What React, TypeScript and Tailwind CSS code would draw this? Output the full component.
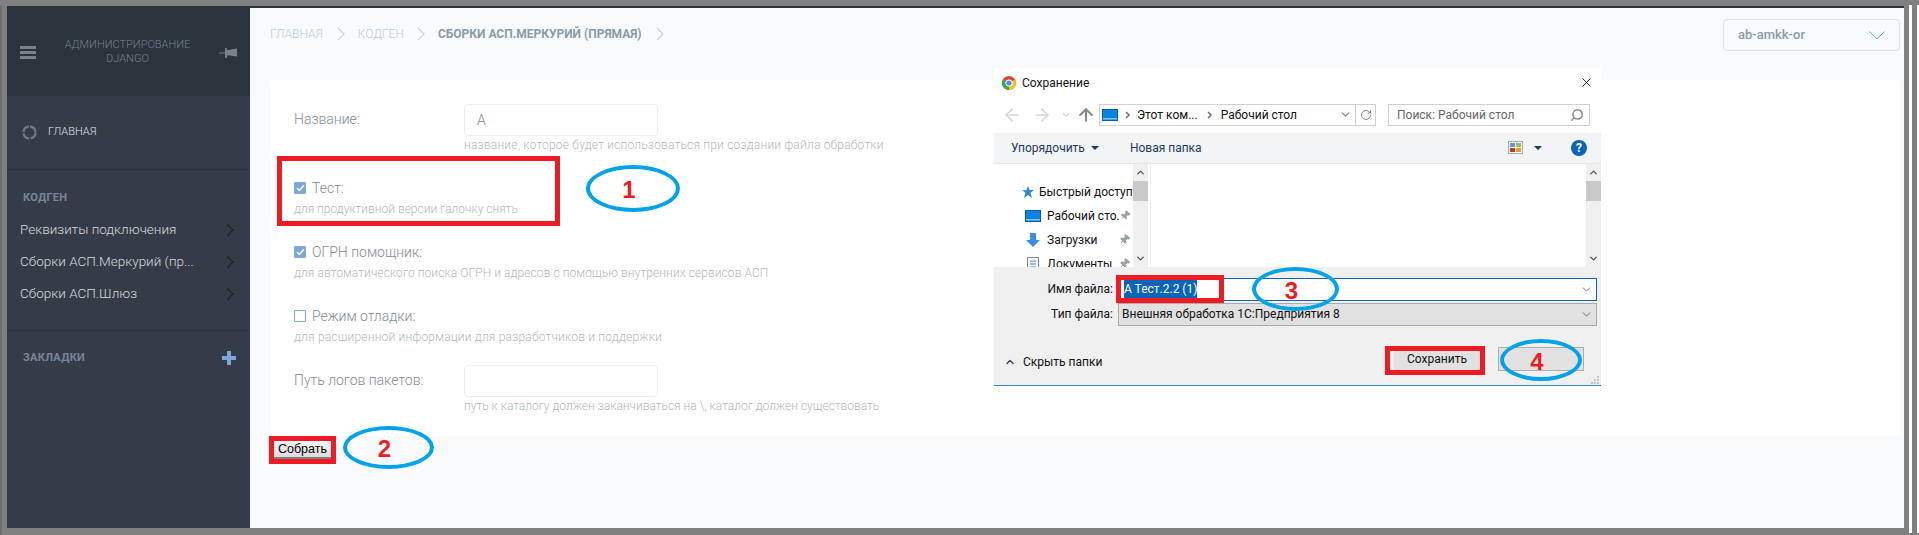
import { ChevronDown, ChevronUp, ArrowLeft, ArrowRight, ArrowUp, RotateCw, Search, X, Pin } from "lucide-react";
import type { ReactNode } from "react";

const SIDE_LINKS = ["Реквизиты подключения", "Сборки АСП.Меркурий (пр...", "Сборки АСП.Шлюз"];

function Chevron({ className }: { className: string }) {
  return (
    <svg width="8" height="14" viewBox="0 0 8 14" className={className}>
      <path d="M1 1l6 6-6 6" fill="none" stroke="currentColor" strokeWidth="1.3" />
    </svg>
  );
}

function SmallChevron({ className }: { className?: string }) {
  return (
    <svg width="5" height="8" viewBox="0 0 5 8" className={className}>
      <path d="M1 1l3 3-3 3" fill="none" stroke="#777" strokeWidth="1.6" />
    </svg>
  );
}

function CheckField({ checked, label, hint, className, hintClass }: { checked: boolean; label: string; hint: string; className?: string; hintClass?: string }) {
  return (
    <div className={className}>
      <div className="flex h-[20px] items-center gap-[6px] text-[14px] font-light text-[#7f8c98]">
        <span className={`flex h-[12px] w-[12px] items-center justify-center rounded-[1px] border border-[#7ba7d9] ${checked ? "bg-[#7ba7d9]" : "bg-white"}`}>
          {checked && (
            <svg width="9" height="8" viewBox="0 0 9 8">
              <path d="M1 4l2.4 2.4L8 1.2" fill="none" stroke="#fff" strokeWidth="1.5" />
            </svg>
          )}
        </span>
        {label}
      </div>
      <p className={`mt-[1px] text-[12px] font-light leading-[20px] text-[#b4b9be] ${hintClass ?? ""}`}>{hint}</p>
    </div>
  );
}

function Marker({ n, className }: { n: string; className: string }) {
  return (
    <div className={`absolute flex items-center justify-center rounded-[50%] border-[4px] border-[#00a2e8] pr-[8px] pt-[3px] font-['Liberation_Sans',sans-serif] text-[24px] font-bold text-[#ed1c24] ${className}`}>
      {n}
    </div>
  );
}

function TreeRow({ label, icon, indent, pinned }: { label: string; icon: ReactNode; indent?: boolean; pinned?: boolean }) {
  return (
    <div className={`flex h-[24px] items-center whitespace-nowrap pr-[3px] text-[12px] text-[#111] ${indent ? "pl-[31px]" : "pl-[26px]"}`}>
      <span className={`flex justify-center ${indent ? "mr-[6px] w-[16px]" : "mr-[5px] w-[14px]"}`}>{icon}</span>
      {label}
      {pinned && <Pin size={11} className="ml-auto rotate-45 text-[#9aa0a6]" fill="#9aa0a6" />}
    </div>
  );
}

function Desktop() {
  return (
    <svg width="16" height="12" viewBox="0 0 16 12">
      <rect x=".5" y=".5" width="15" height="11" fill="#0a84e0" stroke="#0a5ea8" />
      <rect x="1" y="9" width="14" height="1.5" fill="#7cc4f5" />
    </svg>
  );
}

function ScrollTrack() {
  return (
    <div className="flex w-[15px] flex-col items-center bg-[#f0f0f0] text-[#555]">
      <ChevronUp size={11} strokeWidth={3} className="mt-[3px]" />
      <div className="mt-[3px] h-[20px] w-full bg-[#c9c9c9]" />
      <ChevronDown size={11} strokeWidth={3} className="mb-[3px] mt-auto" />
    </div>
  );
}

function SaveDialog() {
  return (
    <div className="absolute left-[994px] top-[68px] flex h-[318px] w-[607px] flex-col border-b border-[#3b83c4] bg-white font-['Roboto',sans-serif] text-[#111]">
      <div className="flex h-[30px] items-center pl-[8px] pr-[7px] text-[12px]">
        <svg width="14" height="14" viewBox="0 0 14 14" className="mr-[6px]">
          <circle cx="7" cy="7" r="7" fill="#e0453a" />
          <path d="M7 7L1 3.5A7 7 0 0 0 7 14z" fill="#3aa757" />
          <path d="M7 7L13 3.5A7 7 0 0 1 7 14z" fill="#f5c518" />
          <circle cx="7" cy="7" r="3.6" fill="#fff" />
          <circle cx="7" cy="7" r="2.6" fill="#4a8af4" />
        </svg>
        Сохранение
        <X size={15} strokeWidth={1.3} className="ml-auto text-black" />
      </div>
      <div className="flex h-[34px] items-center pl-[8px] pr-[11px] text-[12px]">
        <ArrowLeft size={20} className="text-[#d5d8db]" />
        <ArrowRight size={20} className="ml-[10px] text-[#d5d8db]" />
        <ChevronDown size={10} strokeWidth={3} className="ml-[9px] text-[#d5d8db]" />
        <ArrowUp size={20} strokeWidth={2.5} className="ml-[5px] text-[#8a8a8a]" />
        <div className="ml-[3px] flex h-[22px] w-[277px] items-center whitespace-nowrap border border-[#d0d0d0] pl-[2px]">
          <Desktop />
          <SmallChevron className="mx-[7px]" />
          Этот ком...
          <SmallChevron className="mx-[9px]" />
          Рабочий стол
          <ChevronDown size={13} strokeWidth={2.5} className="ml-auto mr-[3px] text-[#888]" />
          <div className="flex h-full w-[20px] items-center justify-center border-l border-[#d0d0d0]">
            <RotateCw size={12} strokeWidth={2} className="text-[#888]" />
          </div>
        </div>
        <div className="ml-[12px] flex h-[22px] flex-1 items-center border border-[#d0d0d0] pl-[8px] pr-[5px] text-[#666]">
          Поиск: Рабочий стол
          <Search size={14} strokeWidth={2.5} className="ml-auto -scale-x-100 text-[#888]" />
        </div>
      </div>
      <div className="mt-[1px] flex h-[31px] items-center border-b border-[#e4e6e8] bg-[#f3f4f6] pl-[17px] pr-[14px] text-[12px] text-[#1b3a5c]">
        Упорядочить
        <span className="ml-[6px] h-0 w-0 border-x-[4px] border-t-[4px] border-x-transparent border-t-[#1b3a5c]" />
        <span className="ml-[31px]">Новая папка</span>
        <div className="ml-auto grid h-[13px] w-[15px] grid-cols-2 gap-[1px] border border-[#aaa] bg-white p-[1px]">
          <span className="bg-[#5b9bd5]" />
          <span className="bg-[#9bbb59]" />
          <span className="bg-[#c0392b]" />
          <span className="bg-[#e0a030]" />
        </div>
        <span className="ml-[11px] h-0 w-0 border-x-[4px] border-t-[4px] border-x-transparent border-t-[#1b3a5c]" />
        <span className="ml-[29px] flex h-[16px] w-[16px] items-center justify-center rounded-full bg-[#0a64b8] text-[12px] font-bold text-white">?</span>
      </div>
      <div className="flex h-[104px] overflow-hidden">
        <div className="w-[139px] overflow-hidden pt-[16px]">
          <TreeRow
            label="Быстрый доступ"
            icon={
              <svg width="14" height="14" viewBox="0 0 14 14">
                <path d="M8 1l1.6 4H14l-3.5 2.7L12 13 8 10l-4 3 1.4-5.2L2 5.2h4.4z" fill="#2b88d8" />
              </svg>
            }
          />
          <TreeRow label="Рабочий сто." indent pinned icon={<Desktop />} />
          <TreeRow
            label="Загрузки"
            indent
            pinned
            icon={
              <svg width="16" height="16" viewBox="0 0 16 16">
                <path d="M5 1h6v7h4l-7 7-7-7h4z" fill="#3b8ee0" />
              </svg>
            }
          />
          <TreeRow
            label="Документы"
            indent
            pinned
            icon={
              <svg width="12" height="14" viewBox="0 0 12 14">
                <rect x=".5" y=".5" width="11" height="13" fill="#fff" stroke="#888" />
                <path d="M3 4h6M3 7h6M3 10h6" stroke="#2b88d8" />
              </svg>
            }
          />
        </div>
        <ScrollTrack />
        <div className="w-[3px] border-r border-[#eeeeee]" />
        <div className="flex-1" />
        <ScrollTrack />
      </div>
      <div className="flex flex-1 flex-col bg-[#f0f0f0] text-[12px]">
        <div className="mt-[11px] flex h-[23px] items-center pr-[4px]">
          <span className="w-[119px] text-right">Имя файла:</span>
          <div className="ml-[5px] flex h-full flex-1 items-center border border-[#0a64b8] bg-white pl-[5px]">
            <span className="bg-[#0a64b8] text-white">А Тест.2.2 (1)</span>
            <ChevronDown size={13} strokeWidth={1.5} className="ml-auto mr-[3px] text-[#555]" />
          </div>
        </div>
        <div className="mt-[2px] flex h-[23px] items-center pr-[4px]">
          <span className="w-[119px] text-right">Тип файла:</span>
          <div className="ml-[5px] flex h-full flex-1 items-center border border-[#aaa] bg-[#e1e1e1] pl-[3px]">
            Внешняя обработка 1С:Предприятия 8
            <ChevronDown size={13} strokeWidth={1.5} className="ml-auto mr-[3px] text-[#555]" />
          </div>
        </div>
        <div className="mt-[21px] flex items-start pl-[10px] pr-[17px]">
          <div className="mt-[3px] flex h-[24px] items-center">
            <ChevronUp size={12} strokeWidth={3} className="mr-[7px] text-[#444]" />
            Скрыть папки
          </div>
          <div className="ml-auto flex h-[24px] w-[86px] items-center justify-center bg-[#e1e1e1]">Сохранить</div>
          <div className="ml-[18px] h-[24px] w-[86px] border border-[#adadad] bg-[#e1e1e1]" />
        </div>
        <svg width="9" height="9" viewBox="0 0 9 9" className="ml-auto mr-[1px] mt-[2px]">
          <path d="M6 0h2v2H6zM3 3h2v2H3zM6 3h2v2H6zM0 6h2v2H0zM3 6h2v2H3zM6 6h2v2H6z" fill="#c4c4c4" />
        </svg>
      </div>
    </div>
  );
}

export default function App() {
  return (
    <div className="relative h-[535px] w-[1919px] overflow-hidden bg-[#808080] pl-[7px] pt-[6px] font-['Roboto',sans-serif]">
      <div className="flex h-[522px] w-[1897px] border-t-[2px] border-[#2b3139]">
        <aside className="flex w-[243px] flex-col bg-[#353c48]">
          <div className="flex h-[88px] items-center bg-[#2b333d] pl-[13px] pr-[13px] text-[#78818c]">
            <div className="flex w-[16px] flex-col gap-[2px]">
              <span className="h-[3px] bg-[#78818c]" />
              <span className="h-[3px] bg-[#78818c]" />
              <span className="h-[3px] bg-[#78818c]" />
            </div>
            <div className="flex-1 text-center text-[11px] font-light leading-[14px]">
              АДМИНИСТРИРОВАНИЕ
              <br />
              DJANGO
            </div>
            <svg width="18" height="13" viewBox="0 0 18 13">
              <path d="M0 7h7" stroke="#78818c" />
              <path d="M6 2h1.5l1 2.2L18 2.5v8L8.5 9.2l-1 2.8H6z" fill="#78818c" />
            </svg>
          </div>
          <div className="flex h-[74px] items-center border-b border-[#2b3340] pl-[15px] text-[11px] font-light text-[#dfe3e8]">
            <svg width="15" height="15" viewBox="0 0 15 15" className="mr-[11px]">
              <circle cx="7.5" cy="7.5" r="6" fill="none" stroke="#6f7885" strokeWidth="2.4" strokeDasharray="8 1.4" />
            </svg>
            ГЛАВНАЯ
          </div>
          <div className="pl-[16px] pt-[20px] text-[11px] font-bold tracking-[0.3px] text-[#78869c]">КОДГЕН</div>
          <div className="mt-[7px] flex flex-col border-b border-[#2b3340] pb-[20px]">
            {SIDE_LINKS.map((link) => (
              <div key={link} className="flex h-[32px] items-center pl-[13px] pr-[16px] text-[13.5px] font-light text-[#d5d9de]">
                <span className="flex-1 truncate">{link}</span>
                <Chevron className="text-[#1f252d]" />
              </div>
            ))}
          </div>
          <div className="flex items-center pl-[16px] pr-[14px] pt-[19px] text-[11px] font-bold tracking-[0.3px] text-[#78869c]">
            ЗАКЛАДКИ
            <svg width="14" height="14" viewBox="0 0 14 14" className="ml-auto">
              <path d="M5 0h4v5h5v4H9v5H5V9H0V5h5z" fill="#7ba7d9" />
            </svg>
          </div>
        </aside>
        <main className="flex min-w-0 flex-1 flex-col bg-[#f9fafc] pl-[20px] pr-[4px]">
          <div className="flex h-[72px] items-start">
            <div className="mt-[16px] flex h-[20px] items-center text-[12px]">
              <span className="font-light text-[#b9ccd8]">ГЛАВНАЯ</span>
              <Chevron className="ml-[14px] mr-[13px] text-[#c5d6e0]" />
              <span className="font-light text-[#b9ccd8]">КОДГЕН</span>
              <Chevron className="ml-[13px] mr-[13px] text-[#c5d6e0]" />
              <span className="font-bold text-[#8a9ba8]">СБОРКИ АСП.МЕРКУРИЙ (ПРЯМАЯ)</span>
              <Chevron className="ml-[14px] text-[#c5d6e0]" />
            </div>
            <div className="ml-auto mt-[11px] flex h-[32px] w-[177px] items-center justify-between rounded-[4px] border border-[#dde1ea] pl-[14px] pr-[14px] text-[13px] font-medium text-[#8a9ba8]">
              ab-amkk-or
              <svg width="16" height="9" viewBox="0 0 16 9">
                <path d="M0.5 0.5L8 8l7.5-7.5" fill="none" stroke="#4fc0c4" />
              </svg>
            </div>
          </div>
          <div className="h-[356px] rounded-[4px] bg-white pl-[24px] pt-[24px] text-[14px] font-light">
            <div className="flex">
              <span className="mt-[5px] w-[170px] text-[#7f8c98]">Название:</span>
              <div>
                <div className="flex h-[32px] w-[194px] items-center rounded-[4px] border border-[#eeeeee] pl-[12px] text-[#7f8c98]">А</div>
                <p className="text-[12px] leading-[18px] tracking-[0.2px] text-[#b4b9be]">название, которое будет использоваться при создании файла обработки</p>
              </div>
            </div>
            <CheckField className="mt-[24px]" checked label="Тест:" hint="для продуктивной версии галочку снять" />
            <CheckField className="mt-[23px]" hintClass="tracking-[0.08px]" checked label="ОГРН помощник:" hint="для автоматического поиска ОГРН и адресов с помощью внутренних сервисов АСП" />
            <CheckField className="mt-[23px]" hintClass="tracking-[0.2px]" checked={false} label="Режим отладки:" hint="для расширенной информации для разработчиков и поддержки" />
            <div className="mt-[18px] flex">
              <span className="mt-[5px] w-[170px] text-[#7f8c98]">Путь логов пакетов:</span>
              <div>
                <div className="h-[32px] w-[194px] rounded-[4px] border border-[#eeeeee]" />
                <p className="text-[12px] leading-[18px] text-[#b4b9be]">путь к каталогу должен заканчиваться на \, каталог должен существовать</p>
              </div>
            </div>
          </div>
          <button className="ml-[4px] mt-[5px] h-[18px] w-[57px] self-start border-b-[2px] border-[#808080] bg-linear-to-b from-[#f6f6f6] to-[#dcdcdc] font-['Liberation_Sans',sans-serif] text-[12.5px] leading-[15px] text-black">
            Собрать
          </button>
        </main>
      </div>

      <SaveDialog />

      <div className="absolute left-[277px] top-[156px] h-[70px] w-[283px] border-[5px] border-[#ed1c24]" />
      <div className="absolute left-[269px] top-[436px] h-[28px] w-[67px] border-[5px] border-[#ed1c24]" />
      <div className="absolute left-[1116px] top-[275px] h-[28px] w-[108px] border-[5px] border-[#ed1c24]" />
      <div className="absolute left-[1385px] top-[346px] h-[29px] w-[100px] border-[5px] border-[#ed1c24]" />

      <Marker n="1" className="left-[586px] top-[165px] h-[47px] w-[94px]" />
      <Marker n="2" className="left-[343px] top-[426px] h-[43px] w-[91px]" />
      <Marker n="3" className="left-[1252px] top-[267px] h-[44px] w-[87px]" />
      <Marker n="4" className="left-[1500px] top-[339px] h-[42px] w-[82px]" />
      <div className="absolute right-0 top-[5px] h-[528px] w-[2px] bg-white" />
      <div className="absolute right-[7px] top-[5px] h-[528px] w-[3px] bg-white" />
      <div className="absolute left-0 top-[5px] h-[530px] w-[2px] bg-[#6e6e6e]" />
    </div>
  );
}
